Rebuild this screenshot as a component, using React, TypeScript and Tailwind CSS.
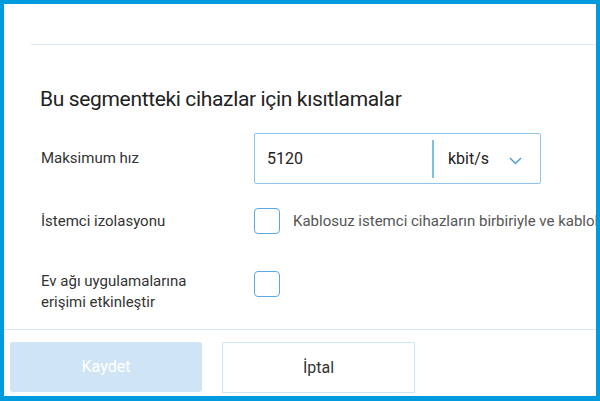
import React, { useState } from 'react';

const font = { fontFamily: 'Roboto, "Noto Sans", sans-serif' };

export default function App() {
  const [speed, setSpeed] = useState('5120');
  const [isolation, setIsolation] = useState(false);
  const [homeApps, setHomeApps] = useState(false);

  return (
    <div className="w-[600px] h-[401px] bg-[#009ade] pt-[4px] pl-[4px] pr-[4px] pb-[5px]" style={font}>
      <div className="w-full h-full bg-white flex flex-col overflow-hidden">
        <div className="flex-1 overflow-hidden">
          <div className="ml-[27px] mt-[40px] h-px bg-[#d3ebf9]" />
          <h2 className="ml-[36px] mt-[42px] text-[21px] leading-[24px] text-[#222] tracking-[-0.35px] whitespace-nowrap">
            Bu segmentteki cihazlar için kısıtlamalar
          </h2>

          <div className="mt-[22px] ml-[37px] flex flex-col">
            <div className="flex items-center h-[51px]">
              <div className="w-[213px] shrink-0 text-[15px] text-[#333]">Maksimum hız</div>
              <div className="w-[287px] h-[51px] shrink-0 border border-[#8cc4ea] rounded-[2px] flex items-center">
                <input
                  value={speed}
                  onChange={(e) => setSpeed(e.target.value)}
                  className="w-[177px] pl-[12px] text-[16px] text-[#222] outline-none bg-transparent"
                />
                <div className="w-[2px] h-[38px] bg-[#7dbde8]" />
                <div className="flex-1 flex items-center justify-between pl-[14px] pr-[18px] text-[16px] text-[#222]">
                  <span>kbit/s</span>
                  <svg width="13" height="8" viewBox="0 0 13 8" fill="none" className="mt-[4px]">
                    <path d="M1 1l5.5 5.5L12 1" stroke="#4a9fdc" strokeWidth="1.5" />
                  </svg>
                </div>
              </div>
            </div>

            <div className="flex items-center mt-[24px] h-[26px]">
              <div className="w-[213px] shrink-0 text-[15px] text-[#333] whitespace-nowrap">İstemci izolasyonu</div>
              <button
                onClick={() => setIsolation(!isolation)}
                className="w-[26px] h-[26px] border border-[#5aa9e6] rounded-[4px] bg-white shrink-0"
              />
              <span className="ml-[13px] text-[15px] text-[#555] whitespace-nowrap">
                Kablosuz istemci cihazların birbiriyle ve kablolu cihazlarla iletişim kurmasını engelle
              </span>
            </div>

            <div className="flex items-start mt-[37px]">
              <div className="w-[213px] shrink-0 text-[15px] leading-[21px] text-[#333]">
                Ev ağı uygulamalarına
                <br />
                erişimi etkinleştir
              </div>
              <button
                onClick={() => setHomeApps(!homeApps)}
                className="w-[26px] h-[26px] border border-[#5aa9e6] rounded-[4px] bg-white shrink-0"
              />
            </div>
          </div>
        </div>

        <div className="h-[67px] border-t border-[#d3e6f5] flex items-start pt-[12px] pl-[6px] gap-[20px] shrink-0">
          <button className="w-[192px] h-[50px] rounded-[3px] bg-[#cfe5f5] text-white text-[16px]">Kaydet</button>
          <button className="w-[193px] h-[51px] border border-[#cfe6f7] bg-white text-[#333] text-[16px]">İptal</button>
        </div>
      </div>
    </div>
  );
}
